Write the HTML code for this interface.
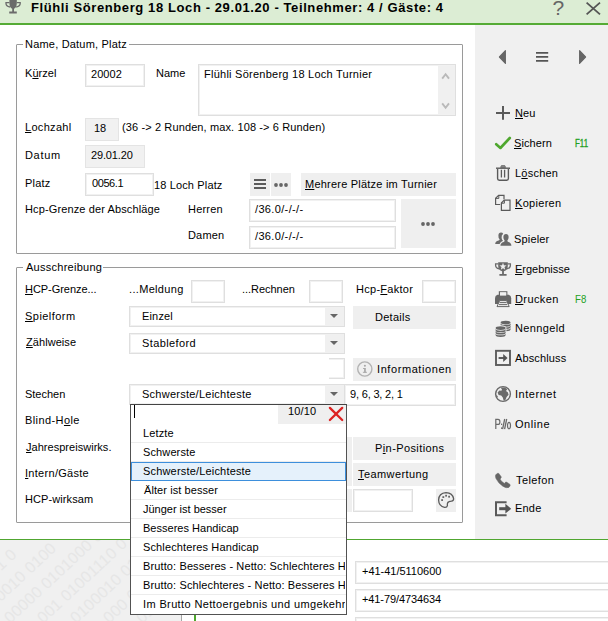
<!DOCTYPE html>
<html><head><meta charset="utf-8">
<style>
html,body{margin:0;padding:0;}
body{width:608px;height:621px;overflow:hidden;position:relative;background:#fff;font-family:"Liberation Sans","DejaVu Sans",sans-serif;font-size:11px;color:#000;}
.a{position:absolute;white-space:nowrap;}
.t{position:absolute;white-space:nowrap;line-height:14px;height:14px;}
.in{position:absolute;box-sizing:border-box;border:1px solid #dfdfdf;background:#fff;box-shadow:inset 0 0 0 1px #f1f1f1;}
.ro{position:absolute;box-sizing:border-box;background:#f1f1f1;border:1px solid #e4e4e4;}
.btn{position:absolute;box-sizing:border-box;background:#efefef;text-align:center;}
u{text-decoration:underline;text-underline-offset:1px;}
.fs{position:absolute;box-sizing:border-box;border:1px solid #9a9a9a;border-radius:1px;}
.lg{position:absolute;background:#fff;padding:0 2px;line-height:14px;}
.li{position:absolute;left:132px;width:213px;height:19px;box-sizing:border-box;border-bottom:1px solid #ececec;line-height:18px;padding-left:11px;white-space:nowrap;overflow:hidden;}

.cb i{position:absolute;right:0;top:0;bottom:0;width:19px;background:#f0f0f0;}
.cb i:after{content:"";position:absolute;left:5px;top:7px;border-left:4.5px solid transparent;border-right:4.5px solid transparent;border-top:4.5px solid #666;}
.sep{position:absolute;left:131px;width:215px;height:1px;background:#ececec;}
.lgm{position:absolute;height:5px;background:#fff;}
.w{position:absolute;height:18px;line-height:18px;font-size:16px;letter-spacing:0.2px;color:#e6e6e6;white-space:pre;transform:rotate(-43deg);transform-origin:0 100%;}
</style></head><body>
<!-- title bar -->
<div class="a" style="left:0;top:0;width:608px;height:23px;background:#dcedd4;"></div>
<div class="a" style="left:0;top:23px;width:608px;height:2px;background:#55ab35;"></div>
<svg class="a" style="left:4px;top:0px" width="18" height="15" viewBox="0 0 18 15"><path d="M5.4 0 H12.8 V3 Q12.8 7.6 10 8.8 V11.6 H12.8 V13.6 H5.2 V11.6 H8.2 V8.8 Q5.4 7.6 5.4 3 Z" fill="#6b6b6b"/><path d="M5.4 2.6 H2 V3.6 Q2 6.4 6 7" stroke="#6b6b6b" stroke-width="1.3" fill="none"/><path d="M12.8 2.6 H16.2 V3.6 Q16.2 6.4 12.2 7" stroke="#6b6b6b" stroke-width="1.3" fill="none"/></svg>
<div class="t" style="left:31px;top:1px;letter-spacing:0.6px;font-weight:bold;font-size:13px;color:#000;">Flühli Sörenberg 18 Loch - 29.01.20 - Teilnehmer: 4 / Gäste: 4</div>
<div class="a" style="left:552.5px;top:-3px;font-size:21px;line-height:22px;color:#666;">?</div>
<svg class="a" style="left:585px;top:1px" width="17" height="15"><path d="M1.6 1.6 L15 13.4 M15 1.6 L1.6 13.4" stroke="#555" stroke-width="1.8" fill="none"/></svg>

<!-- right panel -->
<div class="a" style="left:475px;top:25px;width:133px;height:514px;background:#f0f0f0;"></div>
<svg class="a" style="left:498px;top:49px" width="9" height="16" viewBox="0 0 9 16"><path d="M7.4 1.6 L7.4 14.4 L1.4 8 Z" fill="#666" stroke="#666" stroke-width="1.1" stroke-linejoin="round"/></svg>
<svg class="a" style="left:535px;top:51px" width="14" height="12" viewBox="0 0 14 12"><path d="M1 1.8 H13.2 M1 5.8 H13.2 M1 9.8 H13.2" stroke="#555" stroke-width="1.8"/></svg>
<svg class="a" style="left:578px;top:49px" width="9" height="16" viewBox="0 0 9 16"><path d="M1.6 1.6 L1.6 14.4 L7.6 8 Z" fill="#666" stroke="#666" stroke-width="1.1" stroke-linejoin="round"/></svg>
<svg class="a" style="left:495px;top:105px" width="16" height="16" viewBox="0 0 16 16"><path d="M8 1 V14.8 M1 8 H15" stroke="#5a5a5a" stroke-width="2"/></svg>
<svg class="a" style="left:494px;top:135px" width="18" height="16" viewBox="0 0 18 16"><path d="M2.2 9.2 L6.4 13 L15.8 3" stroke="#4ea72e" stroke-width="2.6" stroke-linecap="round" stroke-linejoin="round" fill="none"/></svg>
<svg class="a" style="left:495px;top:164px" width="16" height="18" viewBox="0 0 16 18"><path d="M5.6 3.4 L6.4 1.6 H9.8 L10.6 3.4 Z" fill="#8a8a8a" stroke="#6a6a6a" stroke-width="0.8"/><path d="M1 4.2 H15" stroke="#5a5a5a" stroke-width="1.4"/><path d="M2.6 5 V14.6 Q2.6 16.2 4.2 16.2 H11.8 Q13.4 16.2 13.4 14.6 V5" stroke="#5a5a5a" stroke-width="1.4" fill="none"/><path d="M6.4 5.8 V13.4 M9.6 5.8 V13.4" stroke="#5a5a5a" stroke-width="1.3"/></svg>
<svg class="a" style="left:494px;top:194px" width="18" height="18" viewBox="0 0 18 18"><path d="M6.2 10.5 H1.6 V4.2 L4.6 1.4 H10 V5.2" stroke="#5a5a5a" stroke-width="1.2" fill="none"/><path d="M1.6 4.4 H4.8 V1.4" stroke="#5a5a5a" stroke-width="1" fill="none"/><path d="M7.4 9 L10.2 6.2 H16 V16.4 H7.4 Z" stroke="#5a5a5a" stroke-width="1.2" fill="#f0f0f0"/><path d="M7.4 9.2 H10.4 V6.2" stroke="#5a5a5a" stroke-width="1" fill="none"/></svg>
<svg class="a" style="left:494px;top:231px" width="18" height="16" viewBox="0 0 18 16"><path d="M1.2 13 Q1.2 10.6 4.6 9.6 Q5.8 9.2 5.6 8.2 Q4.2 6.6 4.4 4.4 Q4.6 1.6 7 1.6 Q8.6 1.6 9.2 2.8 Q7.2 4 7.6 7 Q8 9 9 9.8 Q6 11 5.6 13 Z" fill="#6a6a6a"/><path d="M6.4 14.8 Q6.4 12 9.6 11 Q10.8 10.6 10.6 9.6 Q9.2 8 9.4 5.8 Q9.6 3 12 3 Q14.4 3 14.6 5.8 Q14.8 8 13.4 9.6 Q13.2 10.6 14.4 11 Q17.4 12 17.4 14.8 Z" fill="#6a6a6a"/></svg>
<svg class="a" style="left:494px;top:261px" width="18" height="16" viewBox="0 0 18 16"><path d="M4.2 1.2 H13.8 V5 Q13.8 9.4 9.9 10.2 V13 H12.6 V14.8 H5.4 V13 H8.1 V10.2 Q4.2 9.4 4.2 5 Z" fill="#6a6a6a"/><path d="M4.4 2.8 H1.6 V4.2 Q1.6 7.2 5.2 7.8" stroke="#6a6a6a" stroke-width="1.3" fill="none"/><path d="M13.6 2.8 H16.4 V4.2 Q16.4 7.2 12.8 7.8" stroke="#6a6a6a" stroke-width="1.3" fill="none"/><path d="M9 1.8 L9.95 4.3 L12.6 4.4 L10.5 6.1 L11.2 8.7 L9 7.2 L6.8 8.7 L7.5 6.1 L5.4 4.4 L8.05 4.3 Z" fill="#f0f0f0"/></svg>
<svg class="a" style="left:494px;top:290px" width="18" height="18" viewBox="0 0 18 18"><rect x="5.4" y="1.8" width="7.4" height="5" fill="#f0f0f0" stroke="#666" stroke-width="1.2"/><path d="M3.4 4.8 H14.8 Q17.2 5.6 17.2 8.2 V14 H1 V8.2 Q1 5.6 3.4 4.8 Z" fill="#666"/><rect x="6" y="2.4" width="6.2" height="3.2" fill="#f0f0f0"/><path d="M5.6 10.6 H12.6 L15.2 16.6 H3 Z" fill="#f0f0f0" stroke="#666" stroke-width="1"/><path d="M5.6 12.6 H12.6 M5 14.6 H13.2" stroke="#666" stroke-width="1"/></svg>
<svg class="a" style="left:495px;top:319px" width="17" height="18" viewBox="0 0 17 18"><path d="M5.6 5.9 A5 1.8 0 0 0 15.6 5.9 V4.3 A5 1.8 0 0 1 5.6 4.3 Z" fill="#666"/><path d="M5.6 8.2 A5 1.8 0 0 0 15.6 8.2 V6.6 A5 1.8 0 0 1 5.6 6.6 Z" fill="#666"/><path d="M5.6 10.5 A5 1.8 0 0 0 15.6 10.5 V8.9 A5 1.8 0 0 1 5.6 8.9 Z" fill="#666"/><ellipse cx="10.6" cy="3.6" rx="5" ry="1.8" fill="#666"/><path d="M0 9.0 A5.7 2.7 0 0 1 11.4 9.0 V18 H0 Z" fill="#f0f0f0"/><path d="M0.6 11.4 A5 1.9 0 0 0 10.6 11.4 V9.8 A5 1.9 0 0 1 0.6 9.8 Z" fill="#666"/><path d="M0.6 13.7 A5 1.9 0 0 0 10.6 13.7 V12.1 A5 1.9 0 0 1 0.6 12.1 Z" fill="#666"/><path d="M0.6 16 A5 1.9 0 0 0 10.6 16 V14.4 A5 1.9 0 0 1 0.6 14.4 Z" fill="#666"/><ellipse cx="5.6" cy="9.1" rx="5" ry="1.9" fill="#666"/></svg>
<svg class="a" style="left:494px;top:349px" width="18" height="18" viewBox="0 0 18 18"><rect x="2" y="1.8" width="14" height="14.2" fill="none" stroke="#5c5c5c" stroke-width="1.9"/><path d="M4.6 9 H10.6" stroke="#555" stroke-width="1.9"/><path d="M9.2 5 L13.6 9 L9.2 13 Z" fill="#555"/></svg>
<svg class="a" style="left:494px;top:385px" width="18" height="18" viewBox="0 0 18 18"><circle cx="9" cy="9" r="7.4" fill="#f0f0f0" stroke="#6a6a6a" stroke-width="1.4"/><path d="M6.6 2.6 L11 2.4 L13.2 4.2 L12 6 L13.8 7.2 L14.6 9.8 L12.6 12 L11.2 15.4 L9.6 15.6 L8.8 12.6 L7.2 10.6 L4.6 10 L3.6 7.6 L5.4 5.6 L7.4 5.8 L8 4.4 Z" fill="#6a6a6a"/><path d="M2.4 9.6 L3.6 11.2 L3.4 13 L2.2 11.4 Z" fill="#6a6a6a"/></svg>
<svg class="a" style="left:494px;top:418px" width="18" height="12" viewBox="0 0 18 12"><path d="M1.8 11 V1.4 H4 Q5.9 1.4 5.9 3.9 Q5.9 6.4 4 6.4 H1.8" stroke="#6a6a6a" stroke-width="1.2" fill="none"/><rect x="7" y="5.6" width="1.2" height="1.4" fill="#6a6a6a"/><rect x="7" y="9.4" width="1.2" height="1.5" fill="#6a6a6a"/><path d="M8.6 11.2 L10.7 1 M10.6 11.2 L12.7 1" stroke="#6a6a6a" stroke-width="1.3"/><ellipse cx="15" cy="7.6" rx="1.5" ry="3.2" fill="none" stroke="#6a6a6a" stroke-width="1.2"/></svg>
<svg class="a" style="left:494px;top:472px" width="18" height="17" viewBox="0 0 18 17"><path d="M1.8 2.8 Q3.2 0.6 4.8 1.4 L7.2 4.8 Q7.6 6 6 7 Q7.2 9.8 10.4 11.4 Q11.4 9.8 12.8 10.2 L16 12.4 Q16.8 14 14.8 15.4 Q12.6 16.6 8.8 14.2 Q4.2 11.2 2 6.6 Q1 4 1.8 2.8 Z" fill="#666" stroke="#666" stroke-width="0.5"/></svg>
<svg class="a" style="left:494px;top:500px" width="18" height="18" viewBox="0 0 18 18"><path d="M12.6 2.2 H2 V15.2 H12.6" stroke="#5a5a5a" stroke-width="2" fill="none"/><path d="M5.2 8.7 H12" stroke="#555" stroke-width="3"/><path d="M11.4 3.8 L17.2 8.7 L11.4 13.6 Z" fill="#555"/></svg>

<!-- fieldset 1 -->
<div class="fs" style="left:16px;top:44px;width:447px;height:210px;"></div>
<div class="lgm" style="left:23px;top:42px;width:106px;"></div>
<div class="in" style="left:85px;top:64px;width:60px;height:23px;"></div>
<div class="in" style="left:198px;top:64px;width:258px;height:52px;"></div>
<div class="a" style="left:438px;top:66px;width:17px;height:48px;background:#f0f0f0;"></div>
<svg class="a" style="left:441px;top:72px" width="10" height="8" viewBox="0 0 10 8"><path d="M1.2 6.6 L4.6 2.2 L8 6.6" stroke="#b9b9b9" stroke-width="1.9" fill="none"/></svg>
<svg class="a" style="left:441px;top:102px" width="10" height="8" viewBox="0 0 10 8"><path d="M1.2 1.4 L4.6 5.8 L8 1.4" stroke="#b9b9b9" stroke-width="1.9" fill="none"/></svg>
<div class="ro" style="left:85px;top:118px;width:34px;height:23px;"></div>
<div class="ro" style="left:85px;top:145px;width:60px;height:23px;"></div>
<div class="in" style="left:85px;top:173px;width:69px;height:23px;"></div>
<div class="btn" style="left:250px;top:173px;width:20px;height:23px;"></div>
<div class="btn" style="left:271px;top:173px;width:20px;height:23px;"></div>
<div class="btn" style="left:301px;top:173px;width:155px;height:23px;"></div>
<div class="in" style="left:249px;top:199px;width:147px;height:23px;"></div>
<div class="btn" style="left:401px;top:199px;width:55px;height:49px;"></div>
<div class="in" style="left:249px;top:226px;width:147px;height:23px;"></div>
<svg class="a" style="left:253px;top:178px" width="14" height="12" viewBox="0 0 14 12"><path d="M1 2 H13 M1 6 H13 M1 10 H13" stroke="#5c5c5c" stroke-width="2"/></svg>
<svg class="a" style="left:273px;top:182px" width="16" height="6" viewBox="0 0 16 6"><circle cx="3" cy="3" r="1.9" fill="#666"/><circle cx="8" cy="3" r="1.9" fill="#666"/><circle cx="13" cy="3" r="1.9" fill="#666"/></svg>
<svg class="a" style="left:419px;top:220px" width="18" height="8" viewBox="0 0 18 8"><circle cx="4" cy="4" r="1.9" fill="#666"/><circle cx="9" cy="4" r="1.9" fill="#666"/><circle cx="14" cy="4" r="1.9" fill="#666"/></svg>

<!-- fieldset 2 -->
<div class="fs" style="left:16px;top:267px;width:447px;height:256px;"></div>
<div class="lgm" style="left:23px;top:265px;width:80px;"></div>
<div class="t" style="left:25px;top:37px;letter-spacing:0.2px;">Name, Datum, Platz</div>
<div class="t" style="left:26px;top:260px;letter-spacing:0.26px;">Ausschreibung</div>

<div class="in" style="left:191px;top:280px;width:34px;height:23px;"></div>
<div class="in" style="left:309px;top:280px;width:34px;height:23px;"></div>
<div class="in" style="left:422px;top:280px;width:34px;height:23px;"></div>
<div class="in cb" style="left:129px;top:306px;width:216px;height:21px;"><i></i></div>
<div class="btn" style="left:353px;top:306px;width:103px;height:23px;"></div>
<div class="in cb" style="left:129px;top:333px;width:216px;height:21px;"><i></i></div>
<div class="in" style="left:300px;top:358px;width:45px;height:21px;"></div>
<div class="a" style="left:290px;top:355px;width:39px;height:26px;background:#fff;"></div>
<div class="btn" style="left:353px;top:358px;width:103px;height:23px;"></div>
<svg class="a" style="left:356px;top:360px" width="18" height="18" viewBox="0 0 18 18"><circle cx="8.8" cy="9" r="7.1" fill="none" stroke="#b2b2b2" stroke-width="1.4"/><rect x="8.1" y="8" width="1.7" height="4.6" fill="#a8a8a8"/><rect x="7.1" y="8" width="2" height="1" fill="#a8a8a8"/><rect x="6.9" y="11.8" width="4" height="1" fill="#a8a8a8"/><circle cx="8.9" cy="5.7" r="1.05" fill="#a8a8a8"/></svg>
<div class="in cb" style="left:129px;top:384px;width:216px;height:21px;"><i></i></div>
<div class="in" style="left:344px;top:384px;width:112px;height:22px;"></div>
<div class="btn" style="left:347px;top:437px;width:5px;height:49px;"></div>
<div class="btn" style="left:347px;top:489px;width:5px;height:23px;"></div>
<div class="btn" style="left:353px;top:437px;width:103px;height:23px;"></div>
<div class="btn" style="left:353px;top:463px;width:103px;height:23px;"></div>
<div class="in" style="left:353px;top:489px;width:60px;height:23px;"></div>
<div class="btn" style="left:436px;top:489px;width:20px;height:23px;"></div>
<svg class="a" style="left:437px;top:491px" width="18" height="18" viewBox="0 0 18 18"><path d="M9 1.6 Q15.6 1.8 16.6 7.6 Q16.8 9.8 14.4 10.2 Q11.2 10.4 10.6 12 Q10.2 13 10.4 14.6 Q10 16.6 7.6 16.4 Q1.8 15.2 1.6 9 Q1.8 2 9 1.6 Z" fill="none" stroke="#5a5a5a" stroke-width="1.3"/><rect x="4.2" y="8.2" width="1.8" height="1.8" fill="#666"/><rect x="5.4" y="5.2" width="1.8" height="1.8" fill="#666"/><rect x="8.2" y="3.8" width="1.8" height="1.8" fill="#666"/><rect x="11.2" y="4.8" width="1.8" height="1.8" fill="#666"/></svg>

<!-- bottom -->
<div class="a" style="left:0;top:539px;width:608px;height:1px;background:#50a630;"></div>
<div class="a" id="wm" style="left:0;top:540px;width:182px;height:81px;background:#f0f0f0;overflow:hidden;box-sizing:border-box;border-right:1px solid #a6a6a6;"><div class="w" style="left:-52.6px;top:69px;">0000 00001 0</div><div class="w" style="left:-19.6px;top:69px;">000 0010 0100</div><div class="w" style="left:13.4px;top:69px;">00000 0101000 01</div><div class="w" style="left:46.4px;top:69px;">001 01001110 0</div><div class="w" style="left:79.4px;top:69px;">0100010 010 01</div><div class="w" style="left:112.4px;top:69px;">000 0100111</div><div class="w" style="left:145.4px;top:69px;">0101 010</div></div>
<div class="a" style="left:194px;top:540px;width:2px;height:81px;background:#4ea72e;"></div>
<div class="in" style="left:355px;top:561px;width:260px;height:23px;"></div>
<div class="in" style="left:355px;top:589px;width:260px;height:23px;"></div>
<div class="in" style="left:355px;top:617px;width:260px;height:23px;"></div>
<div class="t" style="left:25px;top:66px;letter-spacing:0.04px;">K<u>ü</u>rzel</div>
<div class="t" style="left:91px;top:67px;letter-spacing:0.05px;">20002</div>
<div class="t" style="left:156px;top:66px;letter-spacing:0.03px;">Name</div>
<div class="t" style="left:204px;top:67px;letter-spacing:0.25px;">Flühli Sörenberg 18 Loch Turnier</div>
<div class="t" style="left:25px;top:120px;letter-spacing:0.31px;"><u>L</u>ochzahl</div>
<div class="t" style="left:94px;top:121px;letter-spacing:-0.2px;">18</div>
<div class="t" style="left:122px;top:120px;letter-spacing:0.12px;">(36 -&gt; 2 Runden, max. 108 -&gt; 6 Runden)</div>
<div class="t" style="left:25px;top:148px;letter-spacing:0.68px;">Datum</div>
<div class="t" style="left:91px;top:148px;letter-spacing:-0.15px;">29.01.20</div>
<div class="t" style="left:25px;top:176px;letter-spacing:0.18px;">Platz</div>
<div class="t" style="left:92px;top:176px;letter-spacing:-0.41px;">0056.1</div>
<div class="t" style="left:154px;top:178px;letter-spacing:0.14px;">18 Loch Platz</div>
<div class="t" style="left:305px;top:177px;letter-spacing:0.22px;"><u>M</u>ehrere Plätze im Turnier</div>
<div class="t" style="left:25px;top:202px;letter-spacing:0.12px;">Hcp-Grenze der Abschläge</div>
<div class="t" style="left:188px;top:202px;letter-spacing:0.19px;">Herren</div>
<div class="t" style="left:255px;top:202px;letter-spacing:0.35px;">/36.0/-/-/-</div>
<div class="t" style="left:188px;top:228px;letter-spacing:0.17px;">Damen</div>
<div class="t" style="left:255px;top:229px;letter-spacing:0.35px;">/36.0/-/-/-</div>
<div class="t" style="left:25px;top:282px;letter-spacing:-0.05px;"><u>H</u>CP-Grenze...</div>
<div class="t" style="left:129px;top:282px;letter-spacing:0.33px;">...Meldung</div>
<div class="t" style="left:242px;top:282px;letter-spacing:-0.04px;">...Rechnen</div>
<div class="t" style="left:356px;top:282px;letter-spacing:0.28px;">Hcp-<u>F</u>aktor</div>
<div class="t" style="left:25px;top:309px;letter-spacing:0.46px;"><u>S</u>pielform</div>
<div class="t" style="left:142px;top:309px;letter-spacing:0.16px;">Einzel</div>
<div class="t" style="left:375px;top:310px;letter-spacing:0.28px;">Details</div>
<div class="t" style="left:26px;top:335px;letter-spacing:0.06px;"><u>Z</u>ählweise</div>
<div class="t" style="left:142px;top:336px;letter-spacing:0.39px;">Stableford</div>
<div class="t" style="left:377px;top:362px;letter-spacing:0.58px;">Informationen</div>
<div class="t" style="left:25px;top:387px;letter-spacing:-0.02px;">Stechen</div>
<div class="t" style="left:142px;top:387px;letter-spacing:0.25px;">Schwerste/Leichteste</div>
<div class="t" style="left:350px;top:387px;letter-spacing:-0.18px;">9, 6, 3, 2, 1</div>
<div class="t" style="left:25px;top:413px;letter-spacing:0.41px;">Blind-H<u>o</u>le</div>
<div class="t" style="left:26px;top:440px;letter-spacing:0.03px;"><u>J</u>ahrespreiswirks.</div>
<div class="t" style="left:25px;top:466px;letter-spacing:0.29px;"><u>I</u>ntern/Gäste</div>
<div class="t" style="left:25px;top:492px;letter-spacing:0.09px;">HCP-wirksam</div>
<div class="t" style="left:375px;top:441px;letter-spacing:0.4px;">P<u>i</u>n-Positions</div>
<div class="t" style="left:358px;top:467px;letter-spacing:0.42px;"><u>T</u>eamwertung</div>
<div class="t" style="left:362px;top:564px;letter-spacing:-0.02px;">+41-41/5110600</div>
<div class="t" style="left:362px;top:592px;letter-spacing:-0.1px;">+41-79/4734634</div>
<div class="t" style="left:515px;top:106px;letter-spacing:0.05px;"><u>N</u>eu</div>
<div class="t" style="left:514px;top:136px;letter-spacing:0.1px;"><u>S</u>ichern</div>
<div class="t" style="left:575px;top:136px;letter-spacing:0px;transform:scaleX(0.718);transform-origin:0 0;color:#22a022;-webkit-text-stroke:0.35px #22a022;">F11</div>
<div class="t" style="left:515px;top:166px;letter-spacing:0.23px;">L<u>ö</u>schen</div>
<div class="t" style="left:515px;top:196px;letter-spacing:0.3px;"><u>K</u>opieren</div>
<div class="t" style="left:514px;top:232px;letter-spacing:0.17px;">Spieler</div>
<div class="t" style="left:515px;top:262px;letter-spacing:-0.02px;"><u>E</u>rgebnisse</div>
<div class="t" style="left:515px;top:292px;letter-spacing:0.4px;"><u>D</u>rucken</div>
<div class="t" style="left:575px;top:292px;letter-spacing:0px;transform:scaleX(0.875);transform-origin:0 0;color:#22a022;">F8</div>
<div class="t" style="left:515px;top:321px;letter-spacing:0.37px;">Nenngeld</div>
<div class="t" style="left:515px;top:351px;letter-spacing:0.14px;">Abschluss</div>
<div class="t" style="left:515px;top:387px;letter-spacing:0.53px;">Internet</div>
<div class="t" style="left:515px;top:417px;letter-spacing:0.56px;">Online</div>
<div class="t" style="left:516px;top:473px;letter-spacing:0.4px;">Telefon</div>
<div class="t" style="left:515px;top:501px;letter-spacing:0.2px;">Ende</div>

<!-- dropdown -->
<div class="a" style="left:130px;top:404px;width:217px;height:211px;box-sizing:border-box;background:#fff;border:1px solid #525252;border-top-color:#444;"></div>
<div class="a" style="left:278px;top:405px;width:68px;height:19px;background:#efefef;"></div>
<div class="a" style="left:134px;top:405px;width:1px;height:13px;background:#000;"></div>
<svg class="a" style="left:328px;top:406px" width="17" height="17"><path d="M1.9 1.9 L14.2 14 M14.2 1.9 L1.9 14" stroke="#dc2222" stroke-width="2.3" stroke-linecap="round" fill="none"/></svg>
<div class="sep" style="top:442px;"></div>
<div class="sep" style="top:461px;"></div>
<div class="sep" style="top:499px;"></div>
<div class="sep" style="top:518px;"></div>
<div class="sep" style="top:537px;"></div>
<div class="sep" style="top:556px;"></div>
<div class="sep" style="top:575px;"></div>
<div class="sep" style="top:594px;"></div>
<div class="a" style="left:131px;top:462px;width:215px;height:19px;box-sizing:border-box;background:#e5f1fb;border:1px solid #3d8fdc;"></div>
<div class="t" style="left:288px;top:404px;letter-spacing:0.15px;">10/10</div>
<div class="t" style="left:143px;top:426px;letter-spacing:0.14px;">Letzte</div>
<div class="t" style="left:143px;top:445px;letter-spacing:0.12px;">Schwerste</div>
<div class="t" style="left:143px;top:464px;letter-spacing:0.18px;">Schwerste/Leichteste</div>
<div class="t" style="left:144px;top:483px;letter-spacing:0.08px;">Älter ist besser</div>
<div class="t" style="left:143px;top:502px;letter-spacing:-0.01px;">Jünger ist besser</div>
<div class="t" style="left:143px;top:521px;letter-spacing:0.02px;">Besseres Handicap</div>
<div class="t" style="left:143px;top:540px;letter-spacing:0.13px;">Schlechteres Handicap</div>
<div class="a" style="left:131px;top:557px;width:214.4px;height:57px;overflow:hidden;"><div style="position:absolute;left:-131px;top:-557px;"><div class="t" style="left:143px;top:559px;letter-spacing:0.12px;">Brutto: Besseres - Netto: Schlechteres Handicap</div>
<div class="t" style="left:143px;top:578px;letter-spacing:0.12px;">Brutto: Schlechteres - Netto: Besseres Handicap</div>
<div class="t" style="left:143px;top:597px;letter-spacing:0.37px;">Im Brutto Nettoergebnis und umgekehrt</div>
</div></div>
</body></html>
